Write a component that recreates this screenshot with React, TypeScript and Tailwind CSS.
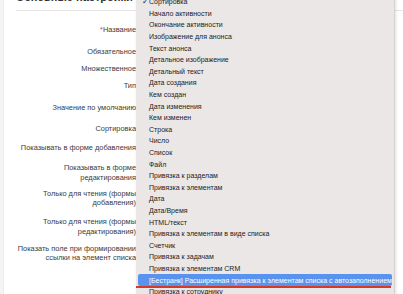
import React from 'react';

const ITEMS = [
  'Сортировка', 'Начало активности', 'Окончание активности', 'Изображение для анонса',
  'Текст анонса', 'Детальное изображение', 'Детальный текст', 'Дата создания',
  'Кем создан', 'Дата изменения', 'Кем изменен', 'Строка', 'Число', 'Список', 'Файл',
  'Привязка к разделам', 'Привязка к элементам', 'Дата', 'Дата/Время', 'HTML/текст',
  'Привязка к элементам в виде списка', 'Счетчик', 'Привязка к задачам',
  'Привязка к элементам CRM',
  '[Бестранк] Расширенная привязка к элементам списка с автозаполнением',
  'Привязка к сотруднику',
];

const ROWS: { lines: string[]; h: string; req?: boolean; mark?: boolean }[] = [
  { lines: ['Название'], h: 'h-[23px]', req: true },
  { lines: ['Обязательное'], h: 'h-[21px]' },
  { lines: ['Множественное'], h: 'h-[14px]' },
  { lines: ['Тип'], h: 'h-[20px]', mark: true },
  { lines: ['Значение по умолчанию'], h: 'h-[23px]' },
  { lines: ['Сортировка'], h: 'h-[19px]' },
  { lines: ['Показывать в форме добавления'], h: 'h-[20px]' },
  { lines: ['Показывать в форме', 'редактирования'], h: 'h-[29px]' },
  { lines: ['Только для чтения (формы', 'добавления)'], h: 'h-[22px]' },
  { lines: ['Только для чтения (формы', 'редактирования)'], h: 'h-[35px]' },
  { lines: ['Показать поле при формировании', 'ссылки на элемент списка'], h: 'h-[18px]' },
];

export default function App() {
  return (
    <div className="relative w-[403px] h-[294px] overflow-hidden bg-white flex" style={{ fontFamily: '"Liberation Sans", Arial, sans-serif' }}>
      <div className="w-[4px] bg-[#f4f4f4] border-r border-[#ececec]" />
      <div className="flex-1 flex flex-col pl-[12px]">
        <div className="h-[11px] border-b border-[#e6e6e6] flex items-end overflow-hidden">
          <span className="text-[11px] font-bold text-[#333] leading-none mb-[7px]">Основные настройки поля</span>
        </div>
        <div className="flex flex-col pt-[7px] w-[120px]">
          {ROWS.map((r, i) => (
            <div key={i} className={`${r.h} relative flex flex-col justify-center items-end text-right text-[7.4px] leading-[9.5px] text-[#3a3a3a] whitespace-nowrap`}>
              {r.lines.map((l, j) => (
                <span key={j}>
                  {r.req && <span className="text-[#d33]">*</span>}
                  {l}
                </span>
              ))}
              {r.mark && <div className="absolute right-[-17px] top-[16px] w-[17px] h-[2px] bg-[#d63a22]" />}
            </div>
          ))}
        </div>
      </div>

      <div className="absolute left-[136px] top-[-4px] w-[259px] h-[310px] bg-[#ebe7e6] border-r border-[#d6d2d0] shadow-[1px_0_3px_rgba(0,0,0,0.12)]">
        {ITEMS.map((t, i) => {
          const sel = i === 24;
          return (
            <div key={i} className="relative h-[11.6px] px-[2px]">
              <div className={`h-full flex items-center pl-[11px] text-[7px] leading-none whitespace-nowrap rounded-[2px] ${sel ? 'bg-[#5a93ee] text-white' : 'text-[#222]'}`}>
                {i === 0 && <span className="absolute left-[6px] text-[8px]">✓</span>}
                {t}
              </div>
              {sel && <div className="absolute left-0 right-[3px] bottom-[-2px] h-[2px] bg-[#d63a22]" />}
            </div>
          );
        })}
      </div>
    </div>
  );
}
